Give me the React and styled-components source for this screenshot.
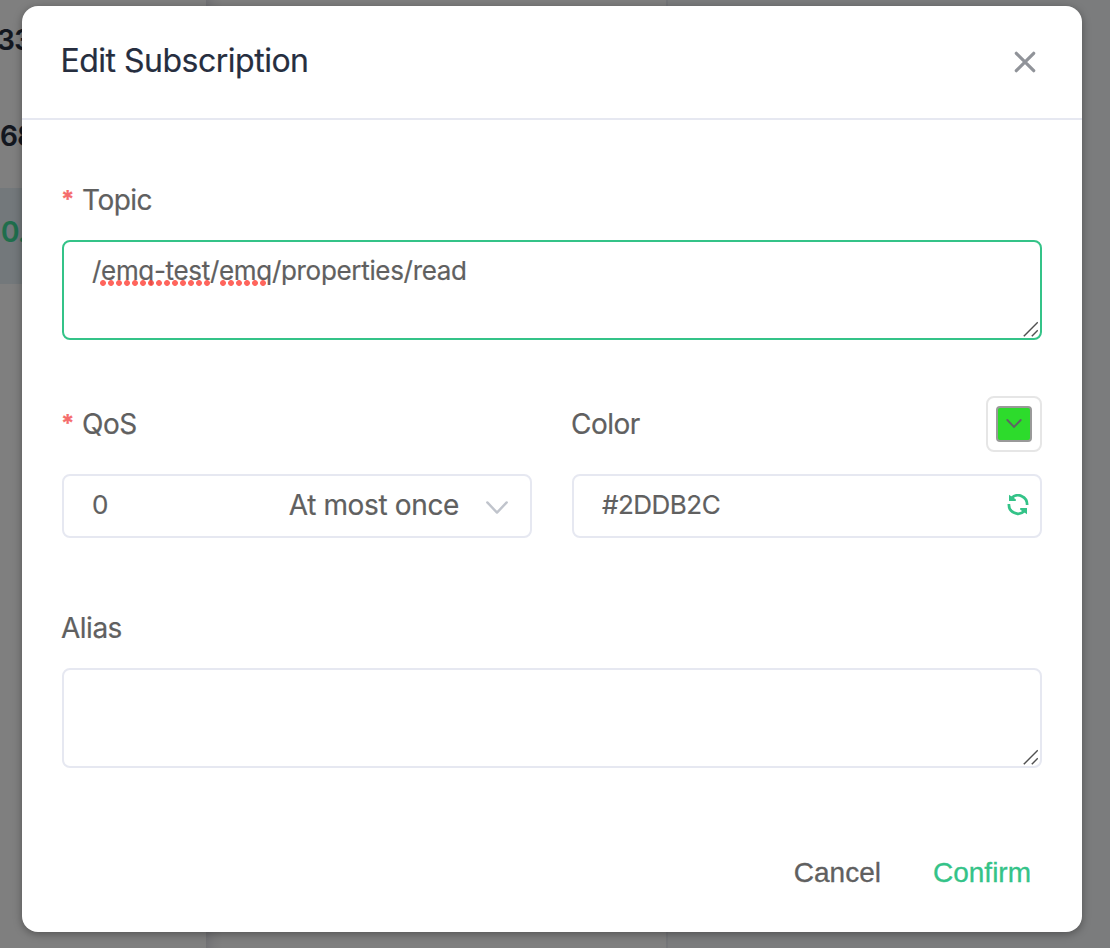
import React from 'react';
import styled, { createGlobalStyle } from 'styled-components';

const GlobalStyle = createGlobalStyle`
  * { box-sizing: border-box; }
  html, body { margin: 0; padding: 0; overflow: hidden; }
  body { font-family: Inter, "Liberation Sans", sans-serif; color: #606060; -webkit-text-stroke: 0.2px; }
`;

const Screen = styled.div`
  position: relative;
  width: 1110px;
  height: 948px;
  overflow: hidden;
  background: #fff;
`;

const Page = styled.div`
  display: flex;
  height: 100%;
`;

const Connections = styled.aside`
  width: 206px;
  background: #fefefe;
  overflow: hidden;
`;

const Connection = styled.div`
  height: ${(p) => (p.$first ? '92px' : '96px')};
  display: flex;
  align-items: center;
  padding-bottom: ${(p) => (p.$first ? '13px' : '9px')};
  text-indent: ${(p) => p.$indent};
  font-size: 28px;
  font-weight: 600;
  letter-spacing: -0.6px;
  white-space: nowrap;
  color: ${(p) => (p.$active ? '#3edc98' : '#262e3f')};
  background: ${(p) => (p.$active ? '#e6f0f7' : 'transparent')};
`;

const Subscriptions = styled.section`
  width: 462px;
  border-right: 2px solid #ebedf2;
  background: linear-gradient(90deg, #e4e4ea 0, #f6f6f8 8px, #fefefe 16px);
`;

const Messages = styled.section`
  flex: 1;
  background: #f6f8fb;
`;

const Overlay = styled.div`
  position: absolute;
  inset: 0;
  display: flex;
  justify-content: center;
  align-items: flex-start;
  padding: 6px 28px 0 22px;
  background: rgba(0, 0, 0, 0.5);
`;

const Dialog = styled.div`
  width: 1060px;
  height: 926px;
  border-radius: 16px;
  background: #fff;
  box-shadow: 0 2px 8px rgba(0, 0, 0, 0.35);
`;

const Header = styled.header`
  height: 114px;
  display: flex;
  justify-content: space-between;
  align-items: center;
  padding: 0 45px 0 38.5px;
  border-bottom: 2px solid #e6e8f1;
`;

const Title = styled.h1`
  margin: 0;
  padding-bottom: 2px;
  font-size: 32px;
  line-height: 40px;
  font-weight: 400;
  letter-spacing: -0.5px;
  color: #262e3f;
`;

const Form = styled.div`
  padding: 60px 40px 0;
`;

const Columns = styled.div`
  display: grid;
  grid-template-columns: 1fr 1fr;
  column-gap: 40px;
  margin: 56px 0 70px;
`;

const LabelRow = styled.div`
  display: flex;
  justify-content: space-between;
  align-items: center;
  height: ${(p) => (p.$tall ? '56px' : '40px')};
  margin-bottom: ${(p) => (p.$tall ? '22px' : '20px')};
`;

const Label = styled.label`
  display: flex;
  margin-left: -1px;
  font-size: 28px;
  line-height: 40px;
  letter-spacing: -0.5px;
`;

const Asterisk = styled.span`
  width: 21px;
  color: #f56c6c;
  font-size: 24px;
  font-weight: 700;
  letter-spacing: 0;
`;

const Area = styled.div`
  position: relative;
  height: 100px;
  padding: 9px 28px;
  border: 2px solid ${(p) => (p.$focused ? '#34c388' : '#e6e8f1')};
  border-radius: 8px;
  font-size: 26px;
  line-height: 40px;
  letter-spacing: -0.32px;
  white-space: nowrap;
`;

const Misspelled = styled.span`
  position: relative;
  &::after {
    content: '';
    position: absolute;
    left: ${(p) => p.$offset};
    top: 25px;
    width: ${(p) => p.$width};
    height: 6px;
    background: radial-gradient(circle at 4px 3px, rgba(255, 74, 64, 0.85) 2.5px, transparent 3.3px) 0 0 / 8px 6px repeat-x;
  }
`;

const Grip = styled.svg`
  position: absolute;
  right: 2px;
  bottom: 1px;
`;

const Field = styled.div`
  height: 64px;
  display: flex;
  align-items: center;
  padding: 0 ${(p) => p.$right} 3px 28px;
  border: 2px solid #e6e8f1;
  border-radius: 8px;
  font-size: 26px;
  line-height: 40px;
`;

const FieldText = styled.span`
  margin-right: auto;
  letter-spacing: -0.5px;
`;

const Description = styled.span`
  font-size: 28px;
  letter-spacing: -0.36px;
`;

const Picker = styled.button`
  width: 56px;
  height: 56px;
  padding: 8px;
  border: 2px solid #e6e6e6;
  border-radius: 8px;
  background: #fff;
`;

const Swatch = styled.span`
  display: flex;
  width: 36px;
  height: 36px;
  border: 2px solid #999;
  border-radius: 4px;
  background: #2ddb2c;
`;

const Footer = styled.footer`
  display: flex;
  justify-content: flex-end;
  gap: 52px;
  padding: 85px 51px 0;
`;

const TextButton = styled.button`
  padding: 0;
  border: 0;
  background: none;
  font-family: "Liberation Sans", Arial, sans-serif;
  font-size: 28px;
  line-height: 40px;
  -webkit-text-stroke: 0.3px;
  color: ${(p) => (p.$primary ? '#34c388' : '#606060')};
`;

const SelectChevron = styled.svg`
  margin-left: 26px;
`;

const ResizeGrip = () => (
  <Grip width="16" height="16" viewBox="0 0 16 16" fill="none" stroke="#505050" strokeWidth="1.5">
    <path d="M1.8 15.2 15.8 1.2M9.8 15.2l6-6" />
  </Grip>
);

const CloseIcon = () => (
  <svg width="24" height="24" viewBox="0 0 24 24" fill="none" stroke="#909399" strokeWidth="3.2" strokeLinecap="round">
    <path d="m3.3 3.3 17.4 17.4m0-17.4-17.4 17.4" />
  </svg>
);

const SelectArrow = () => (
  <SelectChevron width="24" height="24" viewBox="0 0 24 24" fill="none" stroke="#c0c4cc" strokeWidth="2.4" strokeLinecap="round" strokeLinejoin="round">
    <path d="m2.3 9.4 9.7 10.2 9.7-10.2" />
  </SelectChevron>
);

const SwatchArrow = () => (
  <svg width="32" height="32" viewBox="0 0 32 32" fill="none" stroke="#606266" strokeWidth="1.9" strokeLinecap="round">
    <path d="m9.3 12 6.7 7 6.7-7" />
  </svg>
);

const RefreshIcon = () => (
  <svg width="22" height="22" viewBox="0 0 22 22" fill="none" stroke="#34c388" strokeWidth="2.7">
    <path d="M20.1 11A9.1 9.1 0 0 0 4.6 4M1.9 10a9.1 9.1 0 0 0 15.5 7" />
    <path d="M2 .8 4.2 2.2 8.8 5.2V7H2ZM20 20.2 17.8 18.8 13.2 15.8V14H20Z" fill="#34c388" stroke="none" />
  </svg>
);

export default function App() {
  return (
    <Screen>
      <GlobalStyle />
      <Page>
        <Connections>
          <Connection $first $indent="-3px">33</Connection>
          <Connection $indent="0px">68</Connection>
          <Connection $indent="1px" $active>0.</Connection>
        </Connections>
        <Subscriptions />
        <Messages />
      </Page>
      <Overlay>
        <Dialog>
          <Header>
            <Title>Edit Subscription</Title>
            <CloseIcon />
          </Header>
          <Form>
            <LabelRow>
              <Label><Asterisk>*</Asterisk>Topic</Label>
            </LabelRow>
            <Area $focused>
              /<Misspelled $offset="-2px" $width="112px">emq-test</Misspelled>/<Misspelled $offset="0px" $width="48px">emq</Misspelled>/properties/read
              <ResizeGrip />
            </Area>
            <Columns>
              <div>
                <LabelRow $tall>
                  <Label><Asterisk>*</Asterisk>QoS</Label>
                </LabelRow>
                <Field $right="21px">
                  <FieldText>0</FieldText>
                  <Description>At most once</Description>
                  <SelectArrow />
                </Field>
              </div>
              <div>
                <LabelRow $tall>
                  <Label>Color</Label>
                  <Picker><Swatch><SwatchArrow /></Swatch></Picker>
                </LabelRow>
                <Field $right="11px">
                  <FieldText>#2DDB2C</FieldText>
                  <RefreshIcon />
                </Field>
              </div>
            </Columns>
            <LabelRow>
              <Label>Alias</Label>
            </LabelRow>
            <Area><ResizeGrip /></Area>
          </Form>
          <Footer>
            <TextButton>Cancel</TextButton>
            <TextButton $primary>Confirm</TextButton>
          </Footer>
        </Dialog>
      </Overlay>
    </Screen>
  );
}
